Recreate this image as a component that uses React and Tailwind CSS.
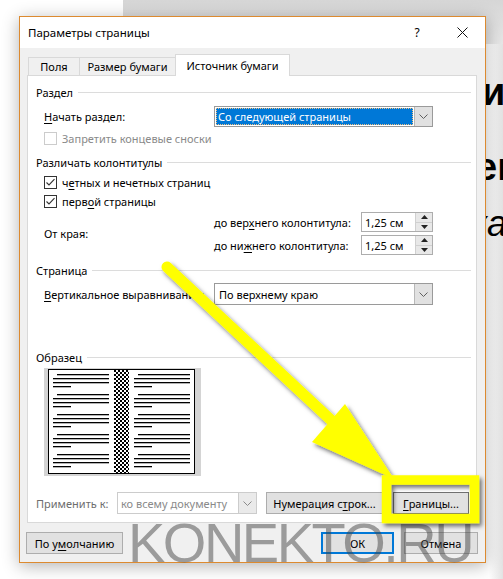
import React from "react";

function Chevron({ color = "#606060" }) {
  return (
    <svg width="9" height="5" viewBox="0 0 9 5">
      <path d="M0.5 0.5 L4.5 4.5 L8.5 0.5" fill="none" stroke={color} strokeWidth="1" />
    </svg>
  );
}

function CheckBox({ checked, disabled }) {
  return (
    <svg width="13" height="13" viewBox="0 0 13 13" className="shrink-0">
      <rect x="0.5" y="0.5" width="12" height="12" fill="white" stroke={disabled ? "#cccccc" : "#333333"} />
      {checked && <path d="M2.5 6.5 L5 9 L10.5 3.2" fill="none" stroke="#333" strokeWidth="1.1" />}
    </svg>
  );
}

function Group({ children }) {
  return (
    <div className="flex items-center h-[14px] pl-[8px] pr-[5px]">
      <span className="leading-none whitespace-nowrap">{children}</span>
      <div className="flex-1 h-px bg-[#dcdcdc] ml-[5px]" />
    </div>
  );
}

function Spin({ value }) {
  return (
    <div className="w-[72px] h-[20px] border border-[#adadad] bg-white flex">
      <div className="flex-1 flex items-center pl-[3px] leading-none whitespace-nowrap">{value}</div>
      <div className="w-[17px] flex flex-col border-l border-[#d0d0d0] bg-[#e8e8e8]">
        <div className="flex-1 flex items-center justify-center border-b border-[#d0d0d0]">
          <svg width="7" height="4" viewBox="0 0 7 4"><path d="M3.5 0 L7 4 L0 4Z" fill="#222" /></svg>
        </div>
        <div className="flex-1 flex items-center justify-center">
          <svg width="7" height="4" viewBox="0 0 7 4"><path d="M0 0 L7 0 L3.5 4Z" fill="#222" /></svg>
        </div>
      </div>
    </div>
  );
}

function Preview() {
  const groups = [6, 26, 46, 66, 86];
  const lines = [];
  groups.forEach((g, i) => {
    lines.push(<rect key={"a" + i} x="13" y={g} width="52" height="1.3" />);
    lines.push(<rect key={"b" + i} x="9" y={g + 4} width="56" height="1.3" />);
    lines.push(<rect key={"c" + i} x="9" y={g + 8} width="56" height="1.3" />);
    lines.push(<rect key={"d" + i} x="9" y={g + 12} width="18" height="1.3" />);
    lines.push(<rect key={"e" + i} x="94" y={g} width="52" height="1.3" />);
    lines.push(<rect key={"f" + i} x="90" y={g + 4} width="56" height="1.3" />);
    lines.push(<rect key={"g" + i} x="90" y={g + 8} width="56" height="1.3" />);
    lines.push(<rect key={"h" + i} x="90" y={g + 12} width="18" height="1.3" />);
  });
  return (
    <svg width="157" height="108" viewBox="0 0 157 108">
      <defs>
        <pattern id="chk" width="4" height="4" patternUnits="userSpaceOnUse">
          <rect width="4" height="4" fill="white" />
          <rect width="2" height="2" fill="black" />
          <rect x="2" y="2" width="2" height="2" fill="black" />
        </pattern>
      </defs>
      <rect width="157" height="108" fill="#d4d4d4" />
      <rect x="4.5" y="1.5" width="146" height="104" fill="white" stroke="black" strokeWidth="1" />
      <rect x="70" y="2" width="15" height="103" fill="url(#chk)" />
      <g fill="black">{lines}</g>
    </svg>
  );
}

export default function App() {
  return (
    <div className="relative w-[503px] h-[579px] overflow-hidden bg-white font-['Noto_Sans',sans-serif] text-black">
      {/* background desktop */}
      <div className="absolute left-[123px] top-0 w-[380px] h-[44px] bg-gradient-to-b from-[#d6d6d6] to-[#e6e6e6]" />
      <div className="absolute right-0 top-[44px] w-[14px] h-[535px] bg-gradient-to-r from-white to-[#e2e2e2]" />
      <div className="absolute left-[482px] top-[73px] text-[38px] leading-none font-bold font-['Liberation_Sans',sans-serif]">и</div>
      <div className="absolute left-[476px] top-[148px] text-[38px] leading-none font-bold font-['Liberation_Sans',sans-serif]">еп</div>
      <div className="absolute left-[470px] top-[206px] text-[36px] leading-none italic font-['Liberation_Sans',sans-serif]">ка</div>

      <div className="relative z-10 pt-[16px] pl-[19px]">
        <div className="w-[467px] h-[547px] border border-[#dc8a30] bg-[#f0f0f0] shadow-[0_3px_16px_rgba(0,0,0,0.3)] flex flex-col">
          {/* title bar */}
          <div className="h-[31px] bg-white flex items-center pl-[8px] text-[11.5px]">
            <span className="leading-none">Параметры страницы</span>
            <div className="ml-auto flex h-full">
              <div className="w-[46px] flex items-center justify-center text-[12px]">?</div>
              <div className="w-[45px] flex items-center justify-center">
                <svg width="11" height="11" viewBox="0 0 11 11"><path d="M0.5 0.5 L10.5 10.5 M10.5 0.5 L0.5 10.5" stroke="#111" strokeWidth="1" /></svg>
              </div>
            </div>
          </div>

          <div className="flex-1 px-[7px] pt-[6px] text-[11px]">
            {/* tabs */}
            <div className="relative z-10 flex items-end h-[21px] pl-[1px]">
              <div className="h-[18px] w-[52px] border border-b-0 border-[#d9d9d9] flex items-center justify-center leading-none">Поля</div>
              <div className="h-[18px] w-[96px] border-t border-r border-[#d9d9d9] flex items-center justify-center leading-none">Размер бумаги</div>
              <div className="h-[22px] w-[115px] -ml-px -mb-px border border-b-0 border-[#d9d9d9] bg-white flex items-center justify-center leading-none">Источник бумаги</div>
            </div>

            {/* panel */}
            <div className="w-[450px] h-[448px] border border-[#d9d9d9] bg-white flex flex-col">
              <div className="mt-[9px]"><Group>Раздел</Group></div>

              <div className="mt-[7px] flex items-center h-[21px] pl-[16px]">
                <span className="w-[170px] leading-none whitespace-nowrap"><span className="underline underline-offset-2">Н</span>ачать раздел:</span>
                <div className="w-[219px] h-[21px] border border-[#9a9a9a] flex bg-white">
                  <div className="flex-1 p-px">
                    <div className="h-full bg-[#0078d7] text-white flex items-center pl-[2px] leading-none outline outline-1 outline-dotted outline-[#f0c080] -outline-offset-1">Со следующей страницы</div>
                  </div>
                  <div className="w-[18px] bg-[#e1e1e1] border-l border-[#b8b8b8] flex items-center justify-center"><Chevron /></div>
                </div>
              </div>

              <div className="mt-[4px] flex items-center h-[14px] pl-[16px] gap-[5px] text-[#8a8a8a]">
                <CheckBox disabled />
                <span className="leading-none whitespace-nowrap">Запретить концевые сноски</span>
              </div>

              <div className="mt-[10px]"><Group>Различать колонтитулы</Group></div>

              <div className="mt-[6px] flex items-center h-[14px] pl-[16px] gap-[5px]">
                <CheckBox checked />
                <span className="leading-none whitespace-nowrap">ч<span className="underline underline-offset-2">е</span>тных и нечетных страниц</span>
              </div>
              <div className="mt-[5px] flex items-center h-[14px] pl-[16px] gap-[5px]">
                <CheckBox checked />
                <span className="leading-none whitespace-nowrap">перв<span className="underline underline-offset-2">о</span>й страницы</span>
              </div>

              <div className="mt-[4px] flex h-[43px]">
                <div className="w-[186px] pl-[16px] flex items-center leading-none">От края:</div>
                <div className="flex flex-col gap-[3px]">
                  <div className="flex items-center h-[20px]">
                    <span className="w-[147px] leading-none whitespace-nowrap">до вер<span className="underline underline-offset-2">х</span>него колонтитула:</span>
                    <Spin value="1,25 см" />
                  </div>
                  <div className="flex items-center h-[20px]">
                    <span className="w-[147px] leading-none whitespace-nowrap">до ни<span className="underline underline-offset-2">ж</span>него колонтитула:</span>
                    <Spin value="1,25 см" />
                  </div>
                </div>
              </div>

              <div className="mt-[8px]"><Group>Страница</Group></div>

              <div className="mt-[6px] flex items-center h-[22px] pl-[16px]">
                <span className="w-[170px] leading-none whitespace-nowrap"><span className="underline underline-offset-2">В</span>ертикальное выравнивание:</span>
                <div className="w-[219px] h-[22px] border border-[#9a9a9a] flex bg-white">
                  <div className="flex-1 flex items-center pl-[4px] leading-none">По верхнему краю</div>
                  <div className="w-[18px] bg-[#e1e1e1] border-l border-[#b8b8b8] flex items-center justify-center"><Chevron /></div>
                </div>
              </div>

              <div className="mt-[45px]"><Group>Образец</Group></div>

              <div className="mt-[4px] pl-[16px] h-[108px]">
                <Preview />
              </div>

              <div className="mt-[16px] flex items-center h-[22px] pl-[8px]">
                <span className="w-[81px] leading-none text-[#6d6d6d] whitespace-nowrap">Применить к:</span>
                <div className="w-[140px] h-[22px] border border-[#cccccc] flex bg-white">
                  <div className="flex-1 flex items-center pl-[3px] leading-none text-[#8a8a8a] whitespace-nowrap">ко всему документу</div>
                  <div className="w-[18px] bg-[#eaeaea] border-l border-[#cccccc] flex items-center justify-center"><Chevron color="#8a8a8a" /></div>
                </div>
                <div className="ml-[9px] w-[117px] h-[22px] border border-[#adadad] bg-[#e1e1e1] flex items-center justify-center leading-none whitespace-nowrap">
                  Нумерация с<span className="underline underline-offset-2">т</span>рок...
                </div>
                <div className="ml-[10px] w-[76px] h-[22px] border border-[#707070] bg-[#e1e1e1] flex items-center justify-center leading-none whitespace-nowrap">
                  <span className="underline underline-offset-2">Г</span>раницы...
                </div>
              </div>
            </div>

            {/* buttons */}
            <div className="mt-[9px] flex h-[22px]">
              <div className="-ml-px w-[97px] h-[22px] border border-[#adadad] bg-[#e1e1e1] flex items-center justify-center leading-none whitespace-nowrap">
                По у<span className="underline underline-offset-2">м</span>олчанию
              </div>
              <div className="ml-[198px] w-[73px] h-[22px] border-2 border-[#0078d7] bg-[#e1e1e1] flex items-center justify-center leading-none">ОК</div>
              <div className="ml-[10px] w-[74px] h-[22px] border border-[#adadad] bg-[#e1e1e1] flex items-center justify-center leading-none">Отмена</div>
            </div>
          </div>
        </div>
      </div>

      {/* watermark */}
      <div className="absolute z-20 left-[128px] top-[515px] text-[56px] leading-none tracking-[-2.5px] text-[rgba(70,70,70,0.5)] font-['Liberation_Sans',sans-serif] whitespace-nowrap pointer-events-none">KONEKTO.RU</div>

      {/* arrow + highlight */}
      <svg className="absolute inset-0 z-30 pointer-events-none" width="503" height="579" viewBox="0 0 503 579">
        <defs>
          <filter id="sh" x="-20%" y="-20%" width="140%" height="140%">
            <feDropShadow dx="2.5" dy="3" stdDeviation="2.2" floodColor="#000" floodOpacity="0.55" />
          </filter>
        </defs>
        <g filter="url(#sh)" fill="#ffff00">
          <line x1="167" y1="267" x2="332" y2="421" stroke="#ffff00" strokeWidth="11" strokeLinecap="round" />
          <polygon points="312,442 345,404 394,479" />
          <rect x="386.5" y="480" width="88" height="38.5" fill="none" stroke="#ffff00" strokeWidth="9.5" />
        </g>
      </svg>
    </div>
  );
}
